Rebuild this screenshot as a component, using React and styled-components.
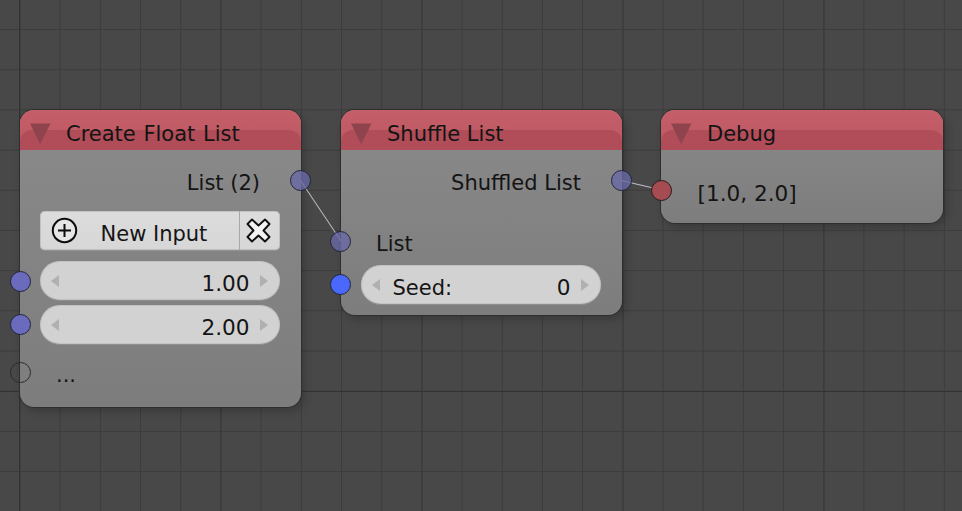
import React from 'react'
import styled, { createGlobalStyle } from 'styled-components'

const Global = createGlobalStyle`
  html, body { margin: 0; padding: 0; background: #484848; }
  * { box-sizing: border-box; }
`

const Canvas = styled.div`
  position: relative;
  width: 962px;
  height: 511px;
  overflow: hidden;
  font-family: "DejaVu Sans", sans-serif;
  color: #141414;
  background-color: #484848;
  background-image:
    linear-gradient(#333333, #333333),
    linear-gradient(#333333, #333333),
    linear-gradient(to right, #393939 1px, transparent 1px),
    linear-gradient(to right, #3c3c3c 1px, transparent 1px),
    linear-gradient(to bottom, #3c3c3c 1px, transparent 1px);
  background-repeat: no-repeat, no-repeat, repeat, repeat, repeat;
  background-size: 1px 100%, 100% 1px, 201px 100%, 40.2px 100%, 100% 40.2px;
  background-position: 19px 0, 0 391px, 19.5px 0, 19.5px 0, 0 29px;
`

const Node = styled.section`
  position: absolute;
  left: ${p => p.$x}px;
  top: 110px;
  width: ${p => p.$w || 281}px;
  height: ${p => p.$h}px;
  border-radius: 14px;
  background: linear-gradient(to bottom, #8a8a8a, #7d7d7d);
  box-shadow: 0 0 0 1px #2e2e2e, 3px 4px 10px rgba(0, 0, 0, 0.22);
`

const Header = styled.header`
  position: relative;
  display: flex;
  align-items: center;
  height: 40px;
  padding-left: 10px;
  border-radius: 14px 14px 0 0;
  background: linear-gradient(to bottom, #c45f69, #bd5762);
  overflow: hidden;
  font-size: 21px;
  &::before {
    content: '';
    position: absolute;
    left: 0;
    right: 0;
    bottom: 0;
    height: 20px;
    border-radius: 12px 12px 0 0;
    background: #b04d58;
  }
`

const Collapse = styled.svg`
  position: relative;
  width: 21px;
  height: 21px;
  margin: 7px 15px 0 0;
  flex: none;
`

const Title = styled.span`
  position: relative;
  padding-top: 8px;
  word-spacing: ${p => p.$ws || 0}px;
`

const Body = styled.div`
  display: flex;
  flex-direction: column;
  padding: 0 21px 0 20px;
`

const Row = styled.div`
  position: relative;
  display: flex;
  align-items: center;
  height: ${p => p.$h}px;
  margin-top: ${p => p.$mt || 0}px;
  justify-content: ${p => (p.$right ? 'flex-end' : 'flex-start')};
  padding: ${p => p.$pad || '0'};
  font-size: ${p => p.$fs || 21}px;
  white-space: nowrap;
`

const Socket = styled.span`
  position: absolute;
  ${p => (p.$side === 'right' ? 'right' : 'left')}: ${p => p.$inset || -31}px;
  top: 50%;
  width: 21px;
  height: 21px;
  margin-top: ${p => p.$dy || -10}px;
  border-radius: 50%;
  border: 1px solid ${p => p.$line || '#23233a'};
  background: ${p => p.$color};
  z-index: 2;
`

const Button = styled.div`
  display: flex;
  width: 240px;
  height: 40px;
  margin-left: -0.5px;
  border-radius: 5px;
  background: linear-gradient(to bottom, #dcdcdc, #d7d7d7);
  border-bottom: 1px solid #929292;
  box-shadow: inset 0 0 0 1px rgba(170, 170, 170, 0.5);
`

const ButtonMain = styled.div`
  display: flex;
  align-items: center;
  width: 200px;
  padding-left: 11px;
  font-size: 21px;
  border-right: 1px solid #a8a8a8;
`

const ButtonLabel = styled.span`
  margin-left: 23px;
  padding-top: 6px;
`

const ButtonIcon = styled.div`
  display: flex;
  flex: 1;
  align-items: center;
  justify-content: center;
  padding-right: 2px;
`

const Field = styled.div`
  display: flex;
  align-items: center;
  width: 240px;
  height: 40px;
  margin-left: -0.5px;
  padding: 0 12px 0 11px;
  border-radius: 20px;
  background: #d2d2d2;
  border-bottom: 1px solid #8e8e8e;
  box-shadow: inset 0 0 0 1px rgba(180, 180, 180, 0.5);
  font-size: 21.6px;
`

const Arrow = styled.span`
  width: 0;
  height: 0;
  flex: none;
  border-top: 6.5px solid transparent;
  border-bottom: 6.5px solid transparent;
  ${p => (p.$dir === 'left'
    ? 'border-right: 8px solid #b0b0b0;'
    : 'border-left: 8px solid #b0b0b0;')}
`

const FieldLabel = styled.span`
  margin-left: 13px;
  padding-top: 7px;
  font-size: 21px;
`

const FieldValue = styled.span`
  margin-left: auto;
  margin-right: 10px;
  padding-top: 6px;
`

const Wires = styled.svg`
  position: absolute;
  left: 0;
  top: 0;
  width: 962px;
  height: 511px;
  z-index: 1;
  pointer-events: none;
`

const TriIcon = () => (
  <Collapse viewBox="0 0 21 21">
    <path d="M0 0.5 H20.5 L10.2 21 Z" fill="#8f434d" />
  </Collapse>
)

const PlusIcon = () => (
  <svg width="27" height="27" viewBox="0 0 27 27">
    <circle cx="13.5" cy="13.5" r="11.7" fill="#e6e6e6" stroke="#0c0c0c" strokeWidth="2" />
    <path d="M13.5 7 V20 M7 13.5 H20" stroke="#0c0c0c" strokeWidth="2" />
  </svg>
)

const CrossIcon = () => (
  <svg width="27" height="27" viewBox="0 0 27 27">
    <path d="M2.5 7 L7 2.5 L13.5 8.5 L20 2.5 L24.5 7 L18.5 13.5 L24.5 20 L20 24.5 L13.5 18.5 L7 24.5 L2.5 20 L8.5 13.5 Z"
      fill="#f4f4f4" stroke="#111" strokeWidth="1.9" strokeLinejoin="round" />
  </svg>
)

const LIST_LINKED = 'rgba(105, 105, 165, 0.8)'

const App = () => (
  <Canvas>
    <Global />

    <Node $x={20} $h={297}>
      <Header><TriIcon /><Title $ws={1}>Create Float List</Title></Header>
      <Body>
        <Row $h={61} $right $pad="5px 20px 0 0">
          List (2)
          <Socket $side="right" $dy={-11} $color={LIST_LINKED} />
        </Row>
        <Button>
          <ButtonMain><PlusIcon /><ButtonLabel>New Input</ButtonLabel></ButtonMain>
          <ButtonIcon><CrossIcon /></ButtonIcon>
        </Button>
        <Row $h={40} $mt={10}>
          <Socket $color="#6a6bbd" $dy={-10} $inset={-30.5} />
          <Field><Arrow $dir="left" /><FieldValue>1.00</FieldValue><Arrow /></Field>
        </Row>
        <Row $h={40} $mt={4}>
          <Socket $color="#6a6bbd" $dy={-11} $inset={-30.5} />
          <Field><Arrow $dir="left" /><FieldValue>2.00</FieldValue><Arrow /></Field>
        </Row>
        <Row $h={40} $mt={13} $pad="0 0 6px 16px">
          <Socket $color="transparent" $line="#2a2a2a" $dy={-16} $inset={-30.5} />
          ...
        </Row>
      </Body>
    </Node>

    <Node $x={341} $h={205}>
      <Header><TriIcon /><Title>Shuffle List</Title></Header>
      <Body>
        <Row $h={61} $right $pad="5px 20px 0 0">
          Shuffled List
          <Socket $side="right" $dy={-11} $color={LIST_LINKED} />
        </Row>
        <Row $h={40} $mt={11} $pad="4px 0 0 15px">
          <Socket $color={LIST_LINKED} $dy={-11} />
          List
        </Row>
        <Row $h={40} $mt={3}>
          <Socket $color="#4a68fb" $dy={-11} />
          <Field><Arrow $dir="left" /><FieldLabel>Seed:</FieldLabel><FieldValue>0</FieldValue><Arrow /></Field>
        </Row>
      </Body>
    </Node>

    <Node $x={661} $w={282} $h={113}>
      <Header><TriIcon /><Title>Debug</Title></Header>
      <Body>
        <Row $h={73} $fs={21.6} $pad="14px 0 0 16.5px">
          <Socket $color="#a54b52" $line="#2a1a1a" $inset={-30} $dy={-7} />
          [1.0, 2.0]
        </Row>
      </Body>
    </Node>

    <Wires viewBox="0 0 962 511">
      <path d="M300.5 180.5 L341 241" stroke="#b4b4bc" strokeWidth="1.1" fill="none" />
      <path d="M621 180.5 L662 190" stroke="#bcbcc4" strokeWidth="1.2" fill="none" />
    </Wires>
  </Canvas>
)

export default App
